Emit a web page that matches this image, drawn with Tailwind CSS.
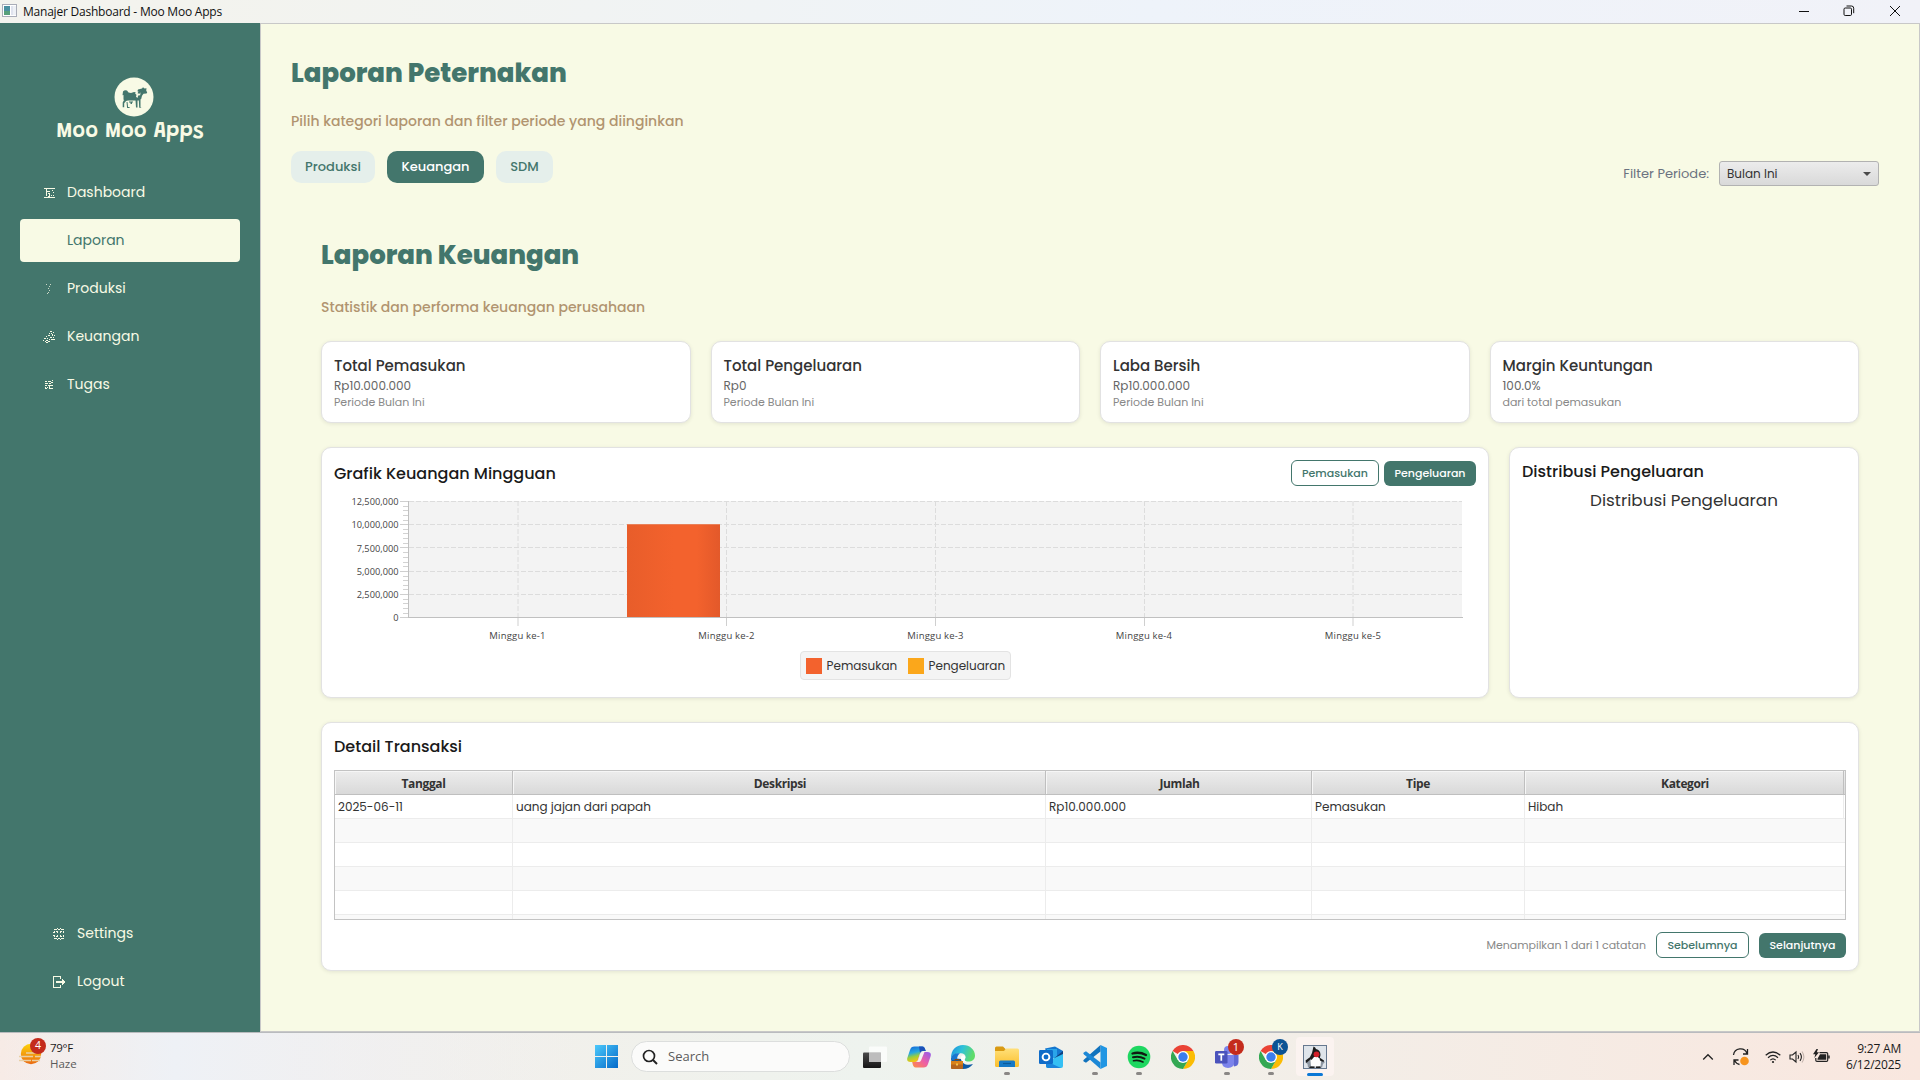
<!DOCTYPE html>
<html lang="id">
<head>
<meta charset="utf-8">
<title>Manajer Dashboard - Moo Moo Apps</title>
<script src="https://cdn.jsdelivr.net/npm/@tailwindcss/browser@4"></script>
</head>
<body class="flex h-[1080px] w-[1920px] flex-col overflow-hidden bg-[#f8fae5] font-['Poppins','Inter',sans-serif] text-[#333]">

<!-- Window title bar -->
<header class="flex h-[23px] shrink-0 items-center bg-linear-to-r from-[#f3f3ee] from-10% via-[#eef3fa] via-60% to-[#f1f2f8] pl-[2px] font-['Open_Sans',sans-serif]">
  <svg class="mt-[-2px] h-[14px] w-[16px]" viewBox="0 0 16 14" shape-rendering="crispEdges">
    <rect x="0.5" y="0.5" width="14" height="12" fill="#fff" stroke="#a9adb8"/>
    <rect x="2" y="2" width="6" height="9" fill="#4a90a0"/><rect x="2" y="7" width="6" height="4" fill="#57a07a"/>
    <rect x="9" y="2" width="2" height="9" fill="#dfe3ee"/><rect x="11" y="2" width="3" height="9" fill="#eef1f6"/>
  </svg>
  <span class="ml-[5px] text-[12px] leading-[23px] tracking-[-0.22px] text-[#111]">Manajer Dashboard - Moo Moo Apps</span>
  <div class="ml-auto flex items-center gap-[34px] pr-[19px]">
    <svg class="h-3 w-3" viewBox="0 0 12 12" stroke="#111" fill="none"><path d="M1 5.500h10"/></svg>
    <svg class="mt-[-2px] ml-[-1px] h-3 w-3" viewBox="0 0 12 12" stroke="#111" fill="none"><rect x="1" y="3" width="7.500" height="7.500" rx="1.200"/><path d="M3.500 1h5a2.200 2.200 0 0 1 2.200 2.200v5"/></svg>
    <svg class="mt-[-2px] h-3 w-3" viewBox="0 0 12 12" stroke="#111" fill="none"><path d="M1 1l10 10M11 1L1 11"/></svg>
  </div>
</header>

<div class="flex h-[1009px] shrink-0">
  <!-- Sidebar -->
  <aside class="flex w-[260px] shrink-0 flex-col bg-[#43766c] text-[14px] text-[#f8fae5]">
    <div class="flex flex-col items-center pt-[54px]">
      <svg class="ml-[7px] h-10 w-10" viewBox="0 0 40 40">
        <circle cx="20" cy="20" r="19.500" fill="#f8fae5"/>
        <g fill="#43766c">
          <path d="M9 14.500q1.500-2 4-1 1 2.500 4 2.500l3-1 3 .5 1-3 4-1 1-1.300 1.500 1.200 2-.2-.3 2.300 1 2-.7 1-3 .3-1.500 2-.8 3.200-2.200 1.500H14l-3 .8-1.500-1.800V18l-1 .3Z"/>
          <path d="M10 23l-1.300 2.500v4.700h1.500v-4l2-2.500ZM12.500 25h1l.6 5h1.500v1h-2.500ZM15 24.500h4v1h-1v1.500h-1.500V25.500H15ZM21.500 23h2v7.500H22ZM24.800 22.500h1.700v7.500l1 .8h-2.300Z"/>
        </g>
        <path fill="#f8fae5" d="M22 14l2.500.5-1 1.800 2 .5 1-1.500-.3 3-2 .3-.7 2.400-1.500-1.200.5-2-1.300-1Z"/>
      </svg>
      <div class="h-[25px] pt-[3px] text-[22px] leading-[25px] font-semibold tracking-[0.05px] font-['Grandstander','Lato',sans-serif]">Moo Moo Apps</div>
    </div>
    <nav class="mt-[29px] flex flex-col gap-[5px] px-[20px]">
      <a class="flex h-[43px] items-center rounded-[4px] pl-[24px]">
        <svg class="h-3 w-3" viewBox="0 0 12 12" fill="#f8fae5" shape-rendering="crispEdges"><path d="M0 1h11v1H0zM0 10h11v1H0zM2 2h1v2h-1zM2 4h1v1H2zM3 4h3v1H3zM2 5h1v4H2zM4 6h2v1H4zM5 7h1v2H5zM4 9h2v1H4zM8 3h1v1H8zM9 5h1v1H9zM7 8h1v1H7zM9 8h1v1H9z"/></svg>
        <span class="ml-[11px]">Dashboard</span>
      </a>
      <a class="flex h-[43px] items-center rounded-[4px] bg-[#f8fae5] pl-[47px] text-[#43766c]">Laporan</a>
      <a class="flex h-[43px] items-center rounded-[4px] pl-[24px]">
        <svg class="h-3 w-3" viewBox="0 0 12 12" fill="#f8fae5" shape-rendering="crispEdges"><path d="M2 1h1v1H2zM6 1h1v1H6zM5 3h1v1H5zM4 5h1v1H4zM5 7h1v1H5zM4 9h1v1H4zM3 10h1v1H3z" opacity=".75"/></svg>
        <span class="ml-[11px]">Produksi</span>
      </a>
      <a class="flex h-[43px] items-center rounded-[4px] pl-[23px]">
        <svg class="h-3 w-[13px]" viewBox="0 0 13 12" fill="#f8fae5" shape-rendering="crispEdges"><path d="M7 0h2v1H7zM10 1h1v1h-1zM6 2h1v1H6zM8 2h1v1H8zM5 4h2v1H5zM9 3h1v2H9zM11 4h1v1h-1zM3 5h1v1H3zM7 6h2v1H7zM10 6h1v1h-1zM1 7h2v1H1zM4 7h1v1H4zM6 8h1v1H6zM8 8h4v1H8zM0 9h1v1H0zM3 9h2v1H3zM2 10h1v1H2zM5 10h2v1H5zM3 11h2v1H3z"/></svg>
        <span class="ml-[11px]">Keuangan</span>
      </a>
      <a class="flex h-[43px] items-center rounded-[4px] pl-[24px]">
        <svg class="h-3 w-3" viewBox="0 0 12 12" fill="#f8fae5" shape-rendering="crispEdges"><path d="M1 2h2v1H1zM4 2h3v1H4zM8 1h1v1H8zM7 3h2v1H7zM1 4h3v1H1zM5 4h2v1H5zM1 6h2v1H1zM4 6h5v1H4zM1 8h1v1H1zM3 8h1v1H3zM5 7h1v2H5zM1 9h2v1H1zM5 9h4v1H5z"/></svg>
        <span class="ml-[11px]">Tugas</span>
      </a>
    </nav>
    <div class="mt-auto flex flex-col gap-[5px] px-[20px] pb-[29px]">
      <a class="flex h-[43px] items-center pl-[33px]">
        <svg class="h-3 w-3" viewBox="0 0 12 12" fill="#f8fae5" shape-rendering="crispEdges"><path d="M4 0h1v1H4zM7 0h1v1H7zM1 1h3v1H1zM5 1h2v1H5zM8 1h3v1H8zM1 3h1v1H1zM3 3h2v1H3zM7 3h2v1H7zM10 3h1v1h-1zM0 4h2v1H0zM4 4h1v1H4zM7 4h1v1H7zM10 4h1v1h-1zM0 7h2v1H0zM4 7h1v1H4zM7 7h1v1H7zM10 7h1v1h-1zM1 8h1v1H1zM3 8h2v1H3zM7 8h2v1H7zM10 8h1v1h-1zM1 10h3v1H1zM5 10h2v1H5zM8 10h3v1H8zM4 11h1v1H4zM7 11h1v1H7z"/></svg>
        <span class="ml-[12px]">Settings</span>
      </a>
      <a class="flex h-[43px] items-center pl-[33px]">
        <svg class="h-3 w-3" viewBox="0 0 12 12" fill="#f8fae5" shape-rendering="crispEdges"><path d="M0 0h8v3H7V1H1v10h6V9h1v3H0zM3 5h6V3h1v1h1v1h1v2h-1v1h-1v1H9V7H3z"/></svg>
        <span class="ml-[12px]">Logout</span>
      </a>
    </div>
  </aside>

  <!-- Content -->
  <main class="flex w-[1660px] flex-col border border-[#c8c8c8] pl-[30px]">
    <h1 class="mt-[31px] text-[26px] leading-9 font-extrabold text-[#43766c]">Laporan Peternakan</h1>
    <p class="mt-[20px] text-[14px] leading-5 font-medium text-[#b19470]">Pilih kategori laporan dan filter periode yang diinginkan</p>
    <div class="mt-[20px] flex h-[35px] justify-between pr-[40px] text-[13px]">
      <div class="flex h-8 gap-[12px] font-medium">
        <button class="flex w-[84px] items-center justify-center rounded-[10px] bg-[#e5efeb] text-[#43766c]">Produksi</button>
        <button class="flex w-[97px] items-center justify-center rounded-[10px] bg-[#43766c] text-white">Keuangan</button>
        <button class="flex w-[57px] items-center justify-center rounded-[10px] bg-[#e5efeb] text-[#43766c]">SDM</button>
      </div>
      <div class="mt-[10px] flex h-[25px] items-center gap-[10px]">
        <span class="text-[#6b7280]">Filter Periode:</span>
        <div class="flex h-[25px] w-[160px] items-center justify-between rounded-[3px] border border-[#b2b2b2] bg-linear-to-b from-[#ececec] to-[#d9d9d9] pr-[7px] pl-[7px] text-[12px] text-[#333]">
          Bulan Ini
          <svg class="h-[4px] w-[8px]" viewBox="0 0 8 4"><path d="M0 0h8l-4 4z" fill="#4a4a4a"/></svg>
        </div>
      </div>
    </div>

    <section class="mt-[52px] ml-[30px] w-[1538px]">
      <h2 class="text-[26px] leading-[35px] font-extrabold text-[#43766c]">Laporan Keuangan</h2>
      <p class="mt-[24px] text-[14px] leading-5 font-medium text-[#b19470]">Statistik dan performa keuangan perusahaan</p>

      <div class="mt-[24px] grid grid-cols-4 gap-[20px]">
        <div class="h-[82px] rounded-[10px] border border-[#e2e2e2] bg-white px-[12px] pt-[14px] shadow-[0_1px_4px_rgba(0,0,0,0.09)]">
          <div class="text-[15px] leading-5 font-medium">Total Pemasukan</div>
          <div class="mt-[2px] text-[12px] leading-4 text-[#666]">Rp10.000.000</div>
          <div class="text-[11px] leading-4 text-[#888]">Periode Bulan Ini</div>
        </div>
        <div class="h-[82px] rounded-[10px] border border-[#e2e2e2] bg-white px-[12px] pt-[14px] shadow-[0_1px_4px_rgba(0,0,0,0.09)]">
          <div class="text-[15px] leading-5 font-medium">Total Pengeluaran</div>
          <div class="mt-[2px] text-[12px] leading-4 text-[#666]">Rp0</div>
          <div class="text-[11px] leading-4 text-[#888]">Periode Bulan Ini</div>
        </div>
        <div class="h-[82px] rounded-[10px] border border-[#e2e2e2] bg-white px-[12px] pt-[14px] shadow-[0_1px_4px_rgba(0,0,0,0.09)]">
          <div class="text-[15px] leading-5 font-medium">Laba Bersih</div>
          <div class="mt-[2px] text-[12px] leading-4 text-[#666]">Rp10.000.000</div>
          <div class="text-[11px] leading-4 text-[#888]">Periode Bulan Ini</div>
        </div>
        <div class="h-[82px] rounded-[10px] border border-[#e2e2e2] bg-white px-[12px] pt-[14px] shadow-[0_1px_4px_rgba(0,0,0,0.09)]">
          <div class="text-[15px] leading-5 font-medium">Margin Keuntungan</div>
          <div class="mt-[2px] text-[12px] leading-4 text-[#666]">100.0%</div>
          <div class="text-[11px] leading-4 text-[#888]">dari total pemasukan</div>
        </div>
      </div>

      <div class="mt-[24px] flex h-[251px] gap-[20px]">
        <div class="flex w-[1168px] flex-col items-center rounded-[10px] border border-[#e2e2e2] bg-white px-[12px] pt-[12px] shadow-[0_1px_4px_rgba(0,0,0,0.09)]">
          <div class="flex h-[26px] w-full items-center justify-between">
            <h3 class="pt-[2px] text-[16px] leading-[24px] font-medium text-[#1a1a1a]">Grafik Keuangan Mingguan</h3>
            <div class="flex h-[26px] items-end gap-[5px] text-[11px] font-medium">
              <button class="flex h-[26px] w-[88px] items-center justify-center rounded-[6px] border border-[#43766c] text-[#43766c]">Pemasukan</button>
              <button class="flex h-[25px] w-[92px] items-center justify-center rounded-[6px] bg-[#43766c] text-white">Pengeluaran</button>
            </div>
          </div>
          <svg class="h-[160px] w-[1142px] shrink-0" viewBox="334 486 1142 160">
            <defs>
              <linearGradient id="bar"><stop offset="0" stop-color="#e85d2a"/><stop offset=".5" stop-color="#f3622d"/><stop offset=".75" stop-color="#f3622d"/><stop offset="1" stop-color="#e3592a"/></linearGradient>
            </defs>
            <rect x="409" y="501" width="1053" height="116" fill="#f3f3f3"/>
            <g stroke="#dcdcdc" stroke-dasharray="5 2"><path d="M409 501.500h1053M409 524.500h1053M409 547.500h1053M409 571.500h1053M409 594.500h1053M518 501v116M726.500 501v116M935.500 501v116M1144.500 501v116M1353 501v116"/></g>
            <rect x="627" y="524" width="93" height="93" fill="url(#bar)"/>
            <path d="M627 524.500h93" stroke="#e98058"/>
            <g stroke="#c0c0c0" fill="none">
              <path d="M408.500 501v117M408 617.500h1055"/>
              <path stroke="#cfcfcf" d="M400 501.500h8M400 524.500h8M400 547.500h8M400 571.500h8M400 594.500h8M400 617.500h8M518 618v8M726.500 618v8M935.500 618v8M1144.500 618v8M1353 618v8"/>
              <path stroke="#d2d2d2" d="M403 506.500h5M403 510.500h5M403 515.500h5M403 520.500h5M403 529.500h5M403 533.500h5M403 538.500h5M403 543.500h5M403 552.500h5M403 557.500h5M403 562.500h5M403 566.500h5M403 576.500h5M403 580.500h5M403 585.500h5M403 589.500h5M403 599.500h5M403 603.500h5M403 608.500h5M403 613.500h5"/>
            </g>
            <g class="font-['Open_Sans',sans-serif] text-[9.25px]" fill="#444" text-anchor="end">
              <text x="398.500" y="505">12,500,000</text><text x="398.500" y="528">10,000,000</text><text x="398.500" y="551.500">7,500,000</text><text x="398.500" y="575">5,000,000</text><text x="398.500" y="598">2,500,000</text><text x="398.500" y="621">0</text>
            </g>
            <g class="font-['Open_Sans',sans-serif] text-[9.5px] tracking-[0.2px]" fill="#444" text-anchor="middle">
              <text x="517.500" y="639">Minggu ke-1</text><text x="726.500" y="639">Minggu ke-2</text><text x="935.500" y="639">Minggu ke-3</text><text x="1144" y="639">Minggu ke-4</text><text x="1353" y="639">Minggu ke-5</text>
            </g>
          </svg>
          <div class="mt-[5px] flex h-[29px] w-[211px] shrink-0 items-center rounded-[4px] border border-[#e3e3e3] bg-[#f4f4f4] pl-[5px] text-[12px] text-[#333]">
            <span class="h-4 w-4 bg-[#f3622d]"></span><span class="ml-[5px] w-[72px]">Pemasukan</span>
            <span class="ml-[9px] h-4 w-4 bg-[#fba71b]"></span><span class="ml-[5px]">Pengeluaran</span>
          </div>
        </div>
        <div class="flex flex-1 flex-col rounded-[10px] border border-[#e2e2e2] bg-white px-[12px] pt-[12px] shadow-[0_1px_4px_rgba(0,0,0,0.09)]">
          <h3 class="text-[16px] leading-6 font-medium text-[#1a1a1a]">Distribusi Pengeluaran</h3>
          <div class="mt-[4px] text-center text-[16.8px] leading-6 text-[#333]">Distribusi Pengeluaran</div>
        </div>
      </div>

      <div class="mt-[24px] h-[249px] rounded-[10px] border border-[#e2e2e2] bg-white px-[12px] pt-[12px] shadow-[0_1px_4px_rgba(0,0,0,0.09)]">
        <h3 class="text-[16px] leading-6 font-medium text-[#1a1a1a]">Detail Transaksi</h3>
        <div class="mt-[11px] h-[150px] overflow-hidden border border-[#c3c3c3] text-[12px]">
          <div class="grid h-6 grid-cols-[178px_533px_266px_213px_1fr] border-b border-[#bfbfbf] bg-linear-to-b from-[#ededed] to-[#d9d9d9] text-center leading-[25px] font-bold tracking-[-0.38px] font-['Open_Sans',sans-serif]">
            <div class="h-[23px] border-r border-[#bfbfbf] shadow-[inset_1px_1px_0_#f6f6f6]">Tanggal</div><div class="h-[23px] border-r border-[#bfbfbf] pl-[2px] shadow-[inset_1px_1px_0_#f6f6f6]">Deskripsi</div><div class="h-[23px] border-r border-[#bfbfbf] pl-[2px] shadow-[inset_1px_1px_0_#f6f6f6]">Jumlah</div><div class="h-[23px] border-r border-[#bfbfbf] shadow-[inset_1px_1px_0_#f6f6f6]">Tipe</div><div class="mr-px h-[23px] border-r border-[#bfbfbf] pl-[2px] shadow-[inset_1px_1px_0_#f6f6f6]">Kategori</div>
          </div>
          <div class="grid h-6 grid-cols-[178px_533px_266px_213px_1fr] border-b border-[#ececec] bg-white leading-[24px]">
            <div class="border-r border-[#ececec] pl-[3px]">2025-06-11</div><div class="border-r border-[#ececec] pl-[3px]">uang jajan dari papah</div><div class="border-r border-[#ececec] pl-[3px]">Rp10.000.000</div><div class="border-r border-[#ececec] pl-[3px]">Pemasukan</div><div class="mr-px border-r border-[#ececec] pl-[3px]">Hibah</div>
          </div>
          <div class="grid h-6 grid-cols-[178px_533px_266px_213px_1fr] border-b border-[#ececec] bg-[#f9f9f9]"><div class="border-r border-[#ececec]"></div><div class="border-r border-[#ececec]"></div><div class="border-r border-[#ececec]"></div><div class="border-r border-[#ececec]"></div><div></div></div>
          <div class="grid h-6 grid-cols-[178px_533px_266px_213px_1fr] border-b border-[#ececec] bg-white"><div class="border-r border-[#ececec]"></div><div class="border-r border-[#ececec]"></div><div class="border-r border-[#ececec]"></div><div class="border-r border-[#ececec]"></div><div></div></div>
          <div class="grid h-6 grid-cols-[178px_533px_266px_213px_1fr] border-b border-[#ececec] bg-[#f9f9f9]"><div class="border-r border-[#ececec]"></div><div class="border-r border-[#ececec]"></div><div class="border-r border-[#ececec]"></div><div class="border-r border-[#ececec]"></div><div></div></div>
          <div class="grid h-6 grid-cols-[178px_533px_266px_213px_1fr] border-b border-[#ececec] bg-white"><div class="border-r border-[#ececec]"></div><div class="border-r border-[#ececec]"></div><div class="border-r border-[#ececec]"></div><div class="border-r border-[#ececec]"></div><div></div></div>
          <div class="grid h-6 grid-cols-[178px_533px_266px_213px_1fr] bg-[#f9f9f9]"><div class="border-r border-[#ececec]"></div><div class="border-r border-[#ececec]"></div><div class="border-r border-[#ececec]"></div><div class="border-r border-[#ececec]"></div><div></div></div>
        </div>
        <div class="mt-[12px] flex h-[26px] items-end justify-end gap-[10px] text-[11px]">
          <span class="leading-[26px] text-[#888]">Menampilkan 1 dari 1 catatan</span>
          <button class="flex h-[26px] w-[93px] items-center justify-center rounded-[6px] border border-[#43766c] font-medium text-[#43766c]">Sebelumnya</button>
          <button class="flex h-[25px] w-[87px] items-center justify-center rounded-[6px] bg-[#43766c] font-medium text-white">Selanjutnya</button>
        </div>
      </div>
    </section>
  </main>
</div>

<!-- Taskbar -->
<footer class="flex h-[48px] shrink-0 border-t border-[#b9bbbe] bg-linear-to-r from-[#f7ebe6] via-[#eef3ee] via-45% to-[#f9e7df] font-['Open_Sans',sans-serif]">
  <div class="flex w-[584px] bg-linear-to-r from-transparent via-[#eef1f6] via-30% to-transparent pl-[18px]">
    <div class="relative h-[47px] w-[32px]">
      <svg class="mt-[8px] h-6 w-6" viewBox="0 0 24 24">
        <defs><linearGradient id="sun" x2="0" y2="1"><stop stop-color="#fdd20a"/><stop offset="1" stop-color="#ea6a12"/></linearGradient></defs>
        <circle cx="13" cy="13" r="10.200" fill="url(#sun)"/>
        <path d="M1 15.500h14M17 15.500h6M8 12h10M1 19.500h12M14 19.500h8" stroke="#e9cfa4" stroke-width="1.500"/>
      </svg>
      <span class="absolute top-[5px] left-[12px] flex h-4 w-4 items-center justify-center rounded-full bg-[#c42b1c] text-[10.5px] text-white">4</span>
    </div>
    <div class="pt-[7px] text-[11.5px] leading-4 text-[#1b1b1b]">
      <div class="tracking-[-0.3px]">79°F</div><div class="text-[#5a5a5a]">Haze</div>
    </div>
  </div>

  <div class="flex h-[47px] items-center">
    <div class="flex w-11 justify-center">
      <svg class="h-[23px] w-[23px]" viewBox="0 0 23 23"><defs><linearGradient id="win" x2="1" y2="1"><stop stop-color="#4cc9fb"/><stop offset="1" stop-color="#0369c9"/></linearGradient></defs><path fill="url(#win)" d="M0 0h11v11H0zM12 0h11v11H12zM0 12h11v11H0zM12 12h11v11H12z"/></svg>
    </div>
    <div class="mr-[3px] ml-[3px] flex h-[31px] w-[219px] items-center rounded-full border border-[#dcdedd] bg-[#fbfbfa] pl-[10px]">
      <svg class="h-4 w-4" viewBox="0 0 16 16" fill="none" stroke="#222" stroke-width="1.700"><circle cx="7" cy="7" r="5.500"/><path d="M11 11l4 4" stroke-width="2"/></svg>
      <span class="ml-[10px] text-[13px] text-[#5c5c5c]">Search</span>
    </div>

    <div class="flex w-11 justify-center">
      <svg class="h-6 w-6" viewBox="0 0 24 24"><defs><linearGradient id="tv" x2="0" y2="1"><stop stop-color="#4a4a4a"/><stop offset="1" stop-color="#161616"/></linearGradient></defs><rect x="0" y="7.500" width="18" height="15.500" rx="1" fill="url(#tv)"/><rect x="6" y="1.500" width="18" height="15.500" rx="1" fill="#fff" opacity=".7"/><rect x="6" y="7.500" width="12" height="9.500" fill="#bdbdbd"/></svg>
    </div>
    <div class="flex w-11 justify-center">
      <svg class="h-6 w-6" viewBox="0 0 24 24"><defs><linearGradient id="cpa" x2=".3" y2="1"><stop stop-color="#1463d8"/><stop offset=".45" stop-color="#25a9e0"/><stop offset=".7" stop-color="#9bcf3c"/><stop offset="1" stop-color="#f6c512"/></linearGradient><linearGradient id="cpb" x1="1" y1="0" x2="0" y2="1"><stop stop-color="#8e5cf0"/><stop offset=".5" stop-color="#ee5fa5"/><stop offset="1" stop-color="#fd8f3f"/></linearGradient></defs>
      <path fill="url(#cpa)" d="M7.500 1.500h7.800c1.800 0 2.500 1.500 3 3.200l.5 1.300h-3c-1.500 0-2.200.8-2.700 2.500l-2 6.300c-.5 1.600-1.300 2.200-3 2.200H3.500C.8 17-.3 15.500.3 13L3 5c.8-2.500 2-3.500 4.500-3.500Z"/>
      <path fill="url(#cpb)" d="M16.500 22.500H8.700c-1.800 0-2.500-1.500-3-3.200L5.200 17h3c1.500 0 2.200-.8 2.700-2.500l2-5.300C13.400 7.600 14.200 7 15.900 7h4.600c2.700 0 3.800 1.500 3.200 4L21 19c-.8 2.500-2 3.500-4.500 3.500Z"/><path fill="#1b50b8" d="M12 1.500h3.300c1.800 0 2.500 1.500 3 3.200l.5 1.300h-3c-1.500 0-2.200.8-2.700 2.500Z"/><path fill="#f3f2ee" d="M14.500 7h3l-3.500 8.500q-.7 1.500-2.500 1.500H9q1.500-.5 2-2l2-6q.4-1.500 1.500-2Z"/></svg>
    </div>
    <div class="flex w-11 justify-center">
      <svg class="h-6 w-6" viewBox="0 0 24 24"><defs><linearGradient id="edg" x2="1" y2=".3"><stop stop-color="#1c8fe0"/><stop offset=".5" stop-color="#2fc2d8"/><stop offset="1" stop-color="#5fdc6a"/></linearGradient></defs>
      <path fill="#0c59a4" d="M0 13c0 6 5 11 12 11 4 0 8-2 10-5-6 2-11 0-12-5Z"/><path fill="url(#edg)" d="M0 13C0 5 5 0 12 0s12 5 12 10.500c0 4-3 6-6.500 6-2.500 0-4-.8-4-1.800 0-.7 1-1.300 1-3 0-2-2-3.500-4.500-3.500C6 8.200 2 9 0 13Z"/><path fill="#1a76cf" d="M0 13c1-3.500 5-5.500 9-4.500-2 1-3 3.500-3 6.500H1Z"/><path fill="#fff" d="M10 13.500c0-2 1-3.200 2.500-3.200 1.200.5 1.900 1.300 1.900 2.200 0 1.400-.9 1.700-.9 2.400 0 .9 1.200 1.500 2.500 1.700-3 .8-6-.6-6-3.100Z"/>
      <rect x="0" y="16" width="12" height="8" rx=".8" fill="#b5651d"/><path d="M0 17q0-1 1-1h10q1 0 1 1v2.500H0z" fill="#d98219"/><rect x="5.200" y="18.500" width="1.600" height="2" fill="#ffd75e"/><path d="M4 16v-1.500h4V16" fill="none" stroke="#8a4a12"/></svg>
    </div>
    <div class="relative flex h-[47px] w-11 items-center justify-center">
      <svg class="h-6 w-6" viewBox="0 0 24 24"><defs><linearGradient id="fld" x2="0" y2="1"><stop stop-color="#ffe07a"/><stop offset="1" stop-color="#fbbf2c"/></linearGradient></defs><path fill="#d99a12" d="M0 3q0-1.500 1.500-1.500H8l2.500 2.500H22v5H0z"/><path fill="url(#fld)" d="M0 6h9l2-2.500h11.500q1.500 0 1.500 1.500v15.500q0 1.500-1.500 1.500h-21Q0 22 0 20.500z"/><path fill="#1679c6" d="M4 22v-5q0-1.500 1.500-1.500h13q1.500 0 1.500 1.500v5z"/><path d="M8 18.500h8" stroke="#0c5a99" stroke-width="1.200"/></svg>
      <span class="absolute bottom-[5px] h-[3px] w-[6px] rounded-full bg-[#8a8785]"></span>
    </div>
    <div class="flex w-11 justify-center">
      <svg class="h-6 w-6" viewBox="0 0 24 24"><path fill="#1577cf" d="M6 3.500L16 1.500l8 4.500v4L10 14z"/><path fill="#2aa5ea" d="M8 4h10v9H8z"/><path fill="#123f7d" d="M24 6l-11 9h11z"/><path fill="#35c0f4" d="M24 9v12q0 2-2 2H9q-2 0-2-2v-4z"/><path fill="#1b86dc" d="M7 16l15 7H9q-2 0-2-2z"/><rect x="0" y="5" width="14" height="14" rx="1.200" fill="#0f6cc9"/><circle cx="7" cy="12" r="3.400" fill="none" stroke="#fff" stroke-width="1.900"/></svg>
    </div>
    <div class="relative flex h-[47px] w-11 items-center justify-center">
      <svg class="h-6 w-6" viewBox="0 0 24 24"><path fill="#2196e3" d="M17.500 0L24 3v18l-6.500 3z"/><path fill="#1173bd" d="M17.500 0v6.500L3 17.800.8 16.500q-1-.8 0-1.700z"/><path fill="#1c88d6" d="M17.500 24v-6.500L3 6.200.8 7.500q-1 .8 0 1.700z"/></svg>
      <span class="absolute bottom-[5px] h-[3px] w-[6px] rounded-full bg-[#8a8785]"></span>
    </div>
    <div class="relative flex h-[47px] w-11 items-center justify-center">
      <svg class="h-6 w-6" viewBox="0 0 24 24"><circle cx="12" cy="12" r="11.300" fill="#1ed760"/><path fill="none" stroke="#101a12" stroke-linecap="round" stroke-width="2.300" d="M5.500 8.500q7-2 13.500 1.500"/><path fill="none" stroke="#101a12" stroke-linecap="round" stroke-width="2" d="M6 12.300q6-1.600 11.500 1.300"/><path fill="none" stroke="#101a12" stroke-linecap="round" stroke-width="1.600" d="M6.500 15.800q5-1.200 9.500 1.200"/></svg>
      <span class="absolute bottom-[5px] h-[3px] w-[6px] rounded-full bg-[#8a8785]"></span>
    </div>
    <div class="flex w-11 justify-center">
      <svg class="h-6 w-6" viewBox="0 0 24 24"><path fill="#ea4335" d="M12 12L1.600 6A12 12 0 0 1 22.400 6z"/><path fill="#fbbc04" d="M12 6h10.400A12 12 0 0 1 12 24l5.200-9z"/><path fill="#34a853" d="M12 12l5.200 3L12 24A12 12 0 0 1 1.600 6l5.200 9z"/><circle cx="12" cy="12" r="6" fill="#fff"/><circle cx="12" cy="12" r="4.700" fill="#3b7ded"/></svg>
    </div>
    <div class="relative flex h-[47px] w-11 items-center justify-center">
      <svg class="h-6 w-6" viewBox="0 0 24 24"><circle cx="20" cy="7" r="2.800" fill="#5059c9"/><circle cx="13" cy="5" r="4" fill="#7b83eb"/><path fill="#5f68d4" d="M15 10h8.500v7q0 4-4.500 4.500z"/><path fill="#7b83eb" d="M7 10h12v7.500q0 5-6 5.500-6-.5-6-5.500z"/><rect y="6" width="12.500" height="12.500" rx="1.200" fill="#4b53bc"/><path d="M3.300 9.300h6M6.300 9.300v6.500" stroke="#fff" stroke-width="1.700"/></svg>
      <span class="absolute top-[6px] right-[5px] flex h-4 w-4 items-center justify-center rounded-full bg-[#c42b1c] text-[11px] text-white">1</span>
      <span class="absolute bottom-[5px] h-[3px] w-[6px] rounded-full bg-[#8a8785]"></span>
    </div>
    <div class="relative flex h-[47px] w-11 items-center justify-center">
      <svg class="h-6 w-6" viewBox="0 0 24 24"><path fill="#ea4335" d="M12 12L1.600 6A12 12 0 0 1 22.400 6z"/><path fill="#fbbc04" d="M12 6h10.400A12 12 0 0 1 12 24l5.200-9z"/><path fill="#34a853" d="M12 12l5.200 3L12 24A12 12 0 0 1 1.600 6l5.200 9z"/><circle cx="12" cy="12" r="6" fill="#fff"/><circle cx="12" cy="12" r="4.700" fill="#3b7ded"/></svg>
      <span class="absolute top-[6px] right-[5px] flex h-4 w-4 items-center justify-center rounded-full bg-[#0b5394] text-[9px] text-white">K</span>
      <span class="absolute bottom-[5px] h-[3px] w-[6px] rounded-full bg-[#8a8785]"></span>
    </div>
    <div class="relative ml-[3px] flex h-[39px] w-[38px] items-center justify-center rounded-[4px] bg-[#fbf3f0]">
      <svg class="h-6 w-6" viewBox="0 0 24 24"><rect x=".5" y=".5" width="23" height="23" fill="#dfe4ea" stroke="#66788f"/>
        <path fill="#8f98a3" d="M2 17l5-4 10 1 5 3-2 2-1 3.500H5L4.500 19z"/>
        <path fill="#fdfdfd" d="M8.500 11l7-.5 2.500 6-.5 4.500q-5 1.500-9.500 0L7.500 16z"/>
        <path fill="#1d1d1d" d="M10.500 1.500q2 .5 2.500 2.500 4.500 1 4.500 6l-.8 3.500-2.700-2-3 .5L8.500 15 6.500 13 9 8zM2.500 15.500L6.500 12.500l1 2-2.500 2-1.500 1.500zM16.500 12.500l4.500 3-.5 1.500-3.500-1.500zM7 21.500h4.500V23H6zM13 21.500h4l1 1.500h-5z"/>
        <circle cx="13.500" cy="9.300" r="2.900" fill="#d3202a"/></svg>
      <span class="absolute bottom-[0px] h-[3px] w-4 rounded-full bg-[#0b78d6]"></span>
    </div>
  </div>

  <div class="flex flex-1 items-center justify-end pr-[19px]">
    <svg class="mr-[18px] h-3 w-3" viewBox="0 0 12 12" fill="none" stroke="#222" stroke-width="1.300"><path d="M1.200 8.500L6 3.700l4.800 4.800"/></svg>
    <svg class="mr-[15px] h-[18px] w-[18px]" viewBox="0 0 18 18" fill="none" stroke="#222" stroke-width="1.300"><path d="M1.500 7A7 7 0 0 1 15 5.500M15.500 1v5H11M2 17v-5h4.500M2.500 12.500q2 3.500 5 4"/><circle cx="12.500" cy="13" r="4.300" fill="#f7941d" stroke="none"/></svg>
    <svg class="mr-[8px] h-4 w-4" viewBox="0 0 16 16" fill="none" stroke="#222" stroke-width="1.200"><path d="M.7 6.300q7.300-6.600 14.600 0M3 8.700q5-4.600 10 0M5.300 11.100q2.700-2.600 5.400 0"/><circle cx="8" cy="13" r="1.100" fill="#222" stroke="none"/></svg>
    <svg class="mr-[8px] h-4 w-4" viewBox="0 0 16 16" fill="none" stroke="#222" stroke-width="1.100"><path d="M1 6v4h2.500l3.500 3V3L3.500 6zM9 6q1.300 2 0 4M11 4.200q2.800 3.800 0 7.600"/><path stroke="#c4b5ae" d="M13 2.500q3.800 5.500 0 11"/></svg>
    <svg class="mr-[16px] h-4 w-[17px]" viewBox="0 0 17 16"><path fill="none" stroke="#222" stroke-width="1.200" d="M6.500 3.600h7q1.200 0 1.200 1.200v6.400q0 1.200-1.200 1.200h-9.500q-1.200 0-1.200-1.200V9"/><path fill="#222" d="M7 5.200h6.200v5.600H4.500v-1zM15.200 6.500h1.500v3h-1.500zM3.500 0L0 5.200h2.300L1.300 9 6 3.300H3.800L5 0z"/></svg>
    <div class="text-right text-[12px] leading-4 tracking-[-0.2px] text-[#1b1b1b]"><div>9:27 AM</div><div>6/12/2025</div></div>
  </div>
</footer>
</body>
</html>
